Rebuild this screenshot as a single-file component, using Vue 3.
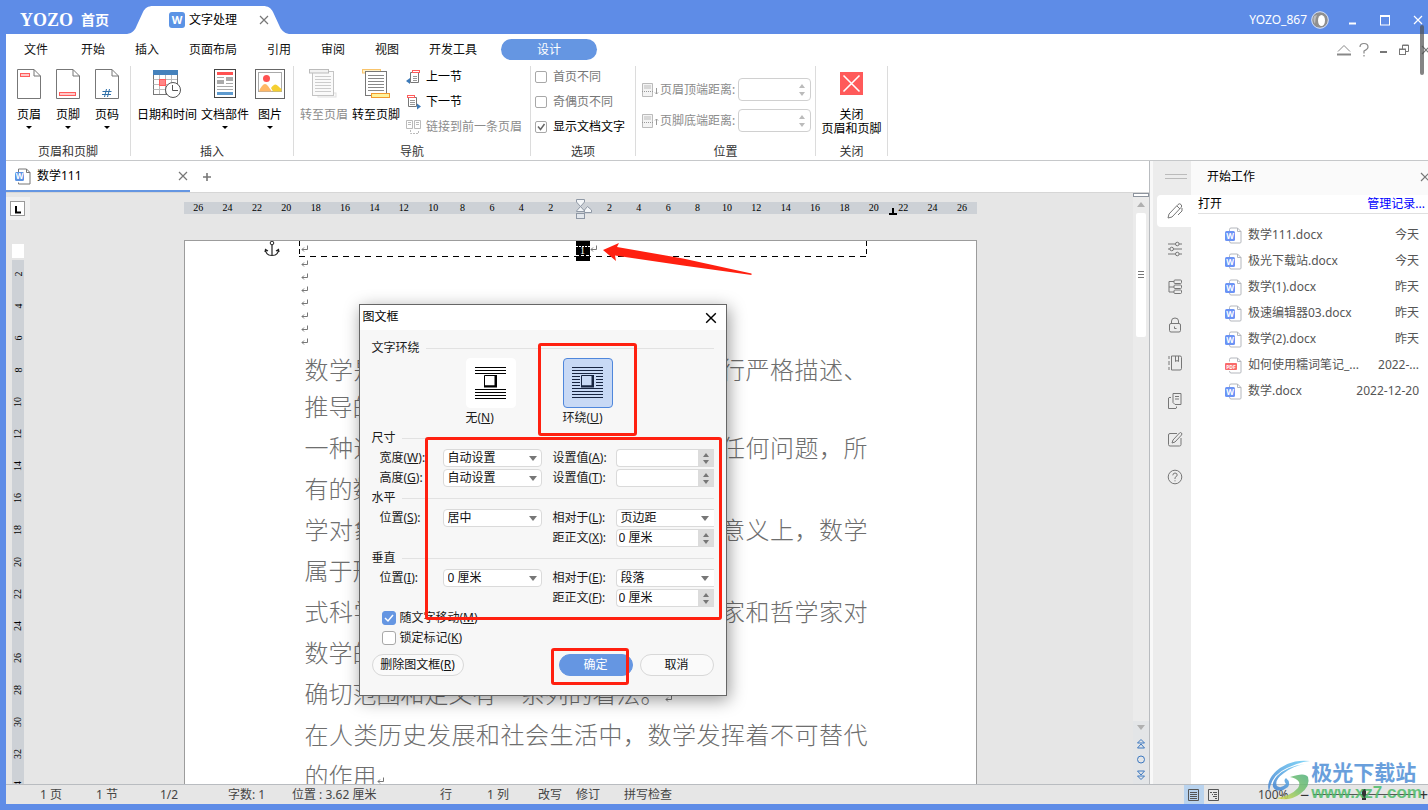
<script setup>
import { ref } from 'vue'

const menus = ['开始', '插入', '页面布局', '引用', '审阅', '视图', '开发工具']
const rulerLeft = [26, 24, 22, 20, 18, 16, 14, 12, 10, 8, 6, 4, 2]
const rulerRight = [...rulerLeft].reverse()
const rulerSide = Array.from({ length: 17 }, (_, i) => (i + 1) * 2)

const lines = [
  { text: '推导的' },
  { text: '一种通用手段，可以应用于现实世界的任何问题，所', full: true },
  { text: '有的数' },
  { text: '学对象本质上都是人为定义的。从这个意义上，数学', full: true },
  { text: '属于形' },
  { text: '式科学，而不是自然科学。不同的数学家和哲学家对', full: true },
  { text: '数学的' },
  { text: '确切范围和定义有一系列的看法。', mark: true },
  { text: '在人类历史发展和社会生活中，数学发挥着不可替代', full: true },
  { text: '的作用', mark: true },
]

const files = [
  { name: '数学111.docx', date: '今天' },
  { name: '极光下载站.docx', date: '今天' },
  { name: '数学(1).docx', date: '昨天' },
  { name: '极速编辑器03.docx', date: '昨天' },
  { name: '数学(2).docx', date: '昨天' },
  { name: '如何使用糯词笔记_...', date: '2022-...', pdf: true },
  { name: '数学.docx', date: '2022-12-20' },
]

const tools = [
  { id: 'pen', label: '开始工作' },
  { id: 'sliders', label: '属性' },
  { id: 'tree', label: '导航' },
  { id: 'lock', label: '限制编辑' },
  { id: 'book', label: '书签' },
  { id: 'copy', label: '剪贴板' },
  { id: 'edit', label: '修订' },
  { id: 'help', label: '帮助' },
]

const status = ['1 页', '1 节', '1/2', '字数: 1', '位置 : 3.62 厘米', '行', '1 列', '改写', '修订', '拼写检查']

const firstDiff = ref(false)
const oddDiff = ref(false)
const showText = ref(true)
const moveWithText = ref(true)
const lockAnchor = ref(false)
</script>

<template>
  <div class="app">
    <svg class="sprite" aria-hidden="true">
      <symbol id="page" viewBox="0 0 24 30">
        <path d="M.5.5H17L23.500 7V29.500H.5Z" fill="#fff" stroke="#777" />
        <path d="M17 .5V7H23.500" fill="none" stroke="#777" />
      </symbol>
      <symbol id="ret" viewBox="0 0 8 8">
        <path d="M6.500 .5V4.500H1M3 2.500L1 4.500L3 6.500" fill="none" stroke="#777" />
      </symbol>
      <symbol id="cross" viewBox="0 0 10 10">
        <path d="M1 1L9 9M9 1L1 9" fill="none" stroke="currentColor" stroke-width="1.200" />
      </symbol>
      <symbol id="pen" viewBox="0 0 16 16">
        <path d="M1 15L2 11L11 1.500Q12.500 0 14 1.500Q15.500 3 14 4.500L5 14Z M10 3L13 6 M15 5V8L11 12" />
      </symbol>
      <symbol id="sliders" viewBox="0 0 16 16">
        <path d="M1 3H8.500M12 3H15M1 8H3M6.500 8H15M1 13H8.500M12 13H15" />
        <circle cx="10.300" cy="3" r="1.800" /><circle cx="4.700" cy="8" r="1.800" /><circle cx="10.300" cy="13" r="1.800" />
      </symbol>
      <symbol id="tree" viewBox="0 0 16 16">
        <path d="M7 2.500H2V13H7M2 8H7" />
        <rect x="7" y="1" width="7.500" height="3.500" rx="1" /><rect x="7" y="6" width="7.500" height="3.500" rx="1" /><rect x="7" y="11" width="7.500" height="3.500" rx="1" />
      </symbol>
      <symbol id="lock" viewBox="0 0 16 16">
        <rect x="2.500" y="6.500" width="11" height="8.500" rx="1.500" />
        <path d="M4.500 6.500V4Q4.500 1 8 1Q11.500 1 11.500 4V6.500M7.500 9.500V11.500H9.500" />
      </symbol>
      <symbol id="book" viewBox="0 0 16 16">
        <path d="M4.500 1H13Q14.500 1 14.500 2.500V13.500Q14.500 15 13 15H4.500ZM8.500 1V6.500L10 5.500L11.500 6.500V1M2 1V4M2 6V10M2 12V15" />
      </symbol>
      <symbol id="copy" viewBox="0 0 16 16">
        <path d="M6 .5H14V11.500H8L6 9.500ZM8 3.500H12M8 6H12M4 4.500H2L1.500 5V15.500H9L9.500 15V13.500" />
      </symbol>
      <symbol id="edit" viewBox="0 0 16 16">
        <path d="M10 2.500H3Q1.500 2.500 1.500 4V13.500Q1.500 15 3 15H12.500Q14 15 14 13.500V7M5 12L6 9L12.500 2Q13.500 1 14.500 2Q15.300 3 14.500 4L8 11Z" />
      </symbol>
      <symbol id="help" viewBox="0 0 16 16">
        <circle cx="8" cy="8" r="6.800" />
        <path d="M5.800 6.300Q6 4 8 4Q10.200 4 10.200 6Q10.200 7.300 8 8.500V10M8 11.300V12.300" />
      </symbol>
    </svg>

    <header class="titlebar">
      <span class="brand">YOZO</span>
      <a class="home" href="#">首页</a>
      <div class="app-tab">
        <svg class="tab-shape" viewBox="0 0 162 28" preserveAspectRatio="none"><path d="M0 28C6 27 8 24 10 19L16 6C18 2 21 0 26 0H136C141 0 144 2 146 6L152 19C154 24 157 27 162 28Z" fill="#fff" /></svg>
        <svg class="w-logo" viewBox="0 0 16 16"><rect width="16" height="16" rx="3" fill="#5b93e5" /><text x="8" y="12" text-anchor="middle" class="logo-w">W</text></svg>
        <span>文字处理</span>
        <button class="plain tab-close" aria-label="关闭标签"><svg width="10" height="10"><use href="#cross" /></svg></button>
      </div>
      <div class="user">
        <span>YOZO_867</span>
        <svg width="18" height="18" viewBox="0 0 18 18"><circle cx="9" cy="9" r="8.300" fill="#8f8f8f" stroke="#d9e4fa" /><ellipse cx="10.500" cy="9.500" rx="3.500" ry="5.500" fill="#fff" /><path d="M3 5Q1.500 9 4 13Q4 8 6 4Z" fill="#bdbdbd" /></svg>
      </div>
      <button class="plain win" aria-label="最小化"><svg width="12" height="12"><path d="M2 9.500H9" stroke="#fff" stroke-width="2" /></svg></button>
      <button class="plain win" aria-label="最大化"><svg width="12" height="12"><rect x="1.500" y="2" width="9" height="9" fill="none" stroke="#fff" /><path d="M1 2H11" stroke="#fff" stroke-width="2" /></svg></button>
      <button class="plain win" aria-label="关闭"><svg width="10" height="10"><use href="#cross" /></svg></button>
    </header>

    <nav class="menubar">
      <a href="#" class="file">文件</a>
      <a v-for="m in menus" :key="m" href="#">{{ m }}</a>
      <a href="#" class="pill">设计</a>
      <div class="menu-right">
        <svg width="16" height="14"><path d="M2 8.500L8 2.500L14 8.500" fill="none" stroke="#888" /><path d="M1 11.500H15" stroke="#888" stroke-width="2" /></svg>
        <svg width="10" height="16"><path d="M1 5Q1 1.500 5 1.500Q9 1.500 9 5Q9 7 5 9V11.500M5 13V14.500" fill="none" stroke="#888" stroke-width="1.200" /></svg>
        <svg width="8" height="14"><path d="M0 9H7" stroke="#777" stroke-width="2" /></svg>
        <svg width="11" height="12"><rect x=".5" y="5" width="6" height="5.500" fill="none" stroke="#777" /><path d="M3.500 5V1H9.500V7.500H6.500M3 1.500H10M0 5.500H7" fill="none" stroke="#777" /></svg>
        <svg width="10" height="10" class="gray"><use href="#cross" /></svg>
      </div>
    </nav>

    <section class="ribbon">
      <div class="group g-head">
        <div class="tools">
          <button class="plain big"><svg width="24" height="30"><use href="#page" /><rect x="3.500" y="4.500" width="9" height="3" fill="#ffc9c9" stroke="#ff5c5c" /></svg><span>页眉</span><i class="caret" /></button>
          <button class="plain big"><svg width="24" height="30"><use href="#page" /><rect x="3.500" y="23.500" width="16" height="3" fill="#ffc9c9" stroke="#ff5c5c" /></svg><span>页脚</span><i class="caret" /></button>
          <button class="plain big"><svg width="24" height="30"><use href="#page" /><path d="M7.500 22.500H16.500M7 25.500H16M11.500 20L9.500 28M14.500 20L12.500 28" stroke="#2f6fa8" /></svg><span>页码</span><i class="caret" /></button>
        </div>
        <div class="cap">页眉和页脚</div>
      </div>

      <div class="group g-insert">
        <div class="tools">
          <button class="plain big">
            <svg width="30" height="30"><rect x="1.500" y="1.500" width="24" height="24" fill="#fff" stroke="#777" /><path d="M1.500 10.500H25M1.500 15.500H25M1.500 20.500H25M7.500 5V25M13.500 5V25M19.500 5V25" stroke="#bbb" /><rect x="1" y="1" width="25" height="5" fill="#4682bc" /><rect x="7.500" y="10.500" width="6" height="6" fill="#ff8585" stroke="#ff5c5c" /><circle cx="21" cy="21" r="7.500" fill="#fff" stroke="#555" /><path d="M20.500 16V21.500H26" fill="none" stroke="#555" /></svg>
            <span>日期和时间</span>
          </button>
          <button class="plain big">
            <svg width="22" height="30"><rect x=".5" y=".5" width="21" height="28" fill="#fff" stroke="#444" /><rect x="3" y="3" width="16" height="3" fill="#ff5252" /><rect x="3" y="11" width="7" height="4" fill="#aaa" /><rect x="12" y="8" width="7" height="4" fill="#aaa" /><path d="M3 8.500H10M12 14.500H19M3 17.500H19M3 20.500H19" stroke="#aaa" /><rect x="3" y="23" width="16" height="3" fill="#5e9ace" /></svg>
            <span>文档部件</span><i class="caret" />
          </button>
          <button class="plain big pic">
            <svg width="30" height="30"><rect x=".5" y=".5" width="29" height="29" fill="#fff" stroke="#666" /><rect x="3.500" y="3.500" width="23" height="19" fill="none" stroke="#aaa" /><circle cx="11.500" cy="9.500" r="3.500" fill="#ff5252" /><path d="M4 22.500Q4.500 20 7 17Q10 13 13 17Q15 20 17 22.500Z" fill="#ffb866" /><path d="M16 19Q20 13 23 17Q25 19 26.500 20V22.500H18Z" fill="#f5cf32" /></svg>
            <span>图片</span><i class="caret" />
          </button>
        </div>
        <div class="cap">插入</div>
      </div>

      <div class="group g-nav">
        <div class="tools">
          <button class="plain big off" disabled>
            <svg width="30" height="30"><rect x="9" y="24" width="18" height="4" fill="#fafafa" stroke="#e0e0e0" /><rect x="3.500" y="2.500" width="21" height="24" fill="#fafafa" stroke="#c4c4c4" /><path d="M6 7.500H22M6 10.500H22M6 13.500H22M6 16.500H22M6 19.500H22M6 22.500H22" stroke="#ccc" /><rect x=".5" y=".5" width="19" height="3.500" fill="#f2f2f2" stroke="#bbb" /></svg>
            <span>转至页眉</span>
          </button>
          <button class="plain big">
            <svg width="30" height="30"><rect x="1.500" y=".5" width="18" height="3.500" fill="#fff1c9" stroke="#f9c46b" /><rect x="4.500" y="2.500" width="21" height="24" fill="#fff" stroke="#777" /><path d="M7 6.500H23M7 9.500H23M7 12.500H23M7 15.500H23M7 18.500H23M7 21.500H23" stroke="#888" /><rect x="10.500" y="24.500" width="18" height="4" fill="#fff39c" stroke="#f29a2e" /></svg>
            <span>转至页脚</span>
          </button>
          <div class="stack">
            <button class="plain small">
              <svg width="16" height="16"><path d="M4.500 3.500H12.500V13.500H4.500Z" fill="#fff" stroke="#777" /><path d="M7 7.500H11M7 9.500H11M7 11.500H11" stroke="#999" /><rect x="6.500" y="1.500" width="7" height="2" fill="#fff" stroke="#ff5c5c" /><path d="M0 12L4 9V15Z" fill="#3d7ab8" /></svg>上一节
            </button>
            <button class="plain small">
              <svg width="16" height="16"><path d="M2.500 3.500H10.500V12.500H2.500Z" fill="#fff" stroke="#777" /><path d="M4 6.500H9M4 8.500H9M4 10.500H9" stroke="#999" /><rect x="1.500" y="1.500" width="7" height="2" fill="#fff" stroke="#ff5c5c" /><path d="M15 12.500L11 9.500V15.500Z" fill="#3d7ab8" /></svg>下一节
            </button>
            <button class="plain small off" disabled>
              <svg width="16" height="16"><path d="M.5 1.500H6.500V9.500H.5ZM8.500 1.500H14.500V9.500H8.500ZM2 3.500H5M2 5.500H5M10 3.500H13M10 5.500H13" fill="none" stroke="#bbb" /><path d="M4.500 11V14.500H12.500V11" fill="none" stroke="#bbb" stroke-dasharray="2 1" /></svg>链接到前一条页眉
            </button>
          </div>
        </div>
        <div class="cap">导航</div>
      </div>

      <div class="group g-opt">
        <div class="tools">
          <div class="stack">
            <label class="check dim"><input v-model="firstDiff" type="checkbox">首页不同</label>
            <label class="check dim"><input v-model="oddDiff" type="checkbox">奇偶页不同</label>
            <label class="check"><input v-model="showText" type="checkbox">显示文档文字</label>
          </div>
        </div>
        <div class="cap">选项</div>
      </div>

      <div class="group g-pos">
        <div class="tools">
          <div class="dist">
            <svg width="18" height="14"><path d="M.5 .5H10.500V13.500H.5ZM2 3H9M2 5H9" fill="#f4f4f4" stroke="#bbb" /><path d="M0 8.500H11" stroke="#999" stroke-dasharray="1 1" /><path d="M14.500 5V11M13 9.500L14.500 11L16 9.500" fill="none" stroke="#999" /></svg>
            <label for="top-dist">页眉顶端距离:</label>
            <span class="num"><input id="top-dist" type="text" disabled><i class="spin" /></span>
          </div>
          <div class="dist">
            <svg width="18" height="14"><path d="M.5 .5H10.500V13.500H.5ZM2 3H9M2 5H9" fill="#f4f4f4" stroke="#bbb" /><path d="M0 8.500H11" stroke="#999" stroke-dasharray="1 1" /><path d="M14.500 11V5M13 6.500L14.500 5L16 6.500" fill="none" stroke="#999" /></svg>
            <label for="bottom-dist">页脚底端距离:</label>
            <span class="num"><input id="bottom-dist" type="text" disabled><i class="spin" /></span>
          </div>
        </div>
        <div class="cap">位置</div>
      </div>

      <div class="group g-close">
        <div class="tools">
          <button class="plain big close-hf">
            <svg width="23" height="23"><rect width="23" height="23" fill="#ff5a5a" /><path d="M3.500 3.500L19.500 19.500M19.500 3.500L3.500 19.500" stroke="#fff" stroke-width="1.600" /></svg>
            <span>关闭<br>页眉和页脚</span>
          </button>
        </div>
        <div class="cap">关闭</div>
      </div>
    </section>

    <main class="main">
      <div class="doc-col">
        <div class="doc-tabs">
          <div class="doc-tab">
            <svg width="17" height="17" viewBox="0 0 17 17">
              <path d="M4.500 4V1H12.500L16 4.500V16H4.500V14.500M12.500 1V4.500H16" fill="none" stroke="#777" />
              <rect x="1" y="4" width="9" height="9" rx="1.500" fill="#5b93e5" />
              <text x="5.500" y="11" text-anchor="middle" class="badge-w">W</text>
            </svg>
            <span>数学111</span>
            <button class="plain tab-close" aria-label="关闭文档"><svg width="10" height="10"><use href="#cross" /></svg></button>
          </div>
          <button class="plain add" aria-label="新建"><svg width="10" height="10"><path d="M5 1V9M1 5H9" stroke="#777" stroke-width="1.600" /></svg></button>
        </div>

        <div class="workspace">
          <aside class="v-ruler">
            <div class="tab-kind"><svg width="15" height="15"><rect x=".5" y=".5" width="14" height="14" fill="#fff" stroke="#999" /><path d="M6 5V11.500H11" fill="none" stroke="#000" stroke-width="2" /></svg></div>
            <div class="v-white" />
            <div class="v-nums"><span v-for="n in rulerSide" :key="n"><b>{{ n }}</b></span></div>
          </aside>

          <div class="canvas">
            <div class="h-ruler">
              <span v-for="n in rulerLeft" :key="'l' + n">{{ n }}</span>
              <span class="indent"><svg width="18" height="22"><path d="M1.500 1.500H9.500V4L5.500 8.500L9.500 13V13.500H1.500V13L5.500 8.500L1.500 4Z" fill="#f4f6f8" stroke="#8f98a5" /><rect x="1.500" y="15.500" width="8" height="5" fill="#e3e7ec" stroke="#8f98a5" /><path d="M9.500 14.500V12L12.500 8.500L16.500 12V14.500Z" fill="#f4f6f8" stroke="#8f98a5" /></svg></span>
              <span v-for="n in rulerRight" :key="'r' + n">{{ n }}</span>
              <svg class="tab-stop" width="8" height="7"><path d="M0 6H8M4 6V0" stroke="#000" stroke-width="2" /></svg>
            </div>

            <article class="page">
              <svg class="anchor" width="16" height="16"><circle cx="8" cy="2" r="1.800" fill="none" stroke="#222" /><path d="M8 4V14.500M1.500 9Q2 14.500 8 14.500Q14 14.500 14.500 9M1 11L1.500 8.500L4 10M15 11L14.500 8.500L12 10" fill="none" stroke="#222" stroke-width="1.200" /></svg>
              <div class="frame">
                <svg width="8" height="8"><use href="#ret" /></svg>
                <span class="sel">1</span>
                <svg width="8" height="8"><use href="#ret" /></svg>
              </div>
              <svg class="arrow" width="150" height="36" viewBox="0 0 150 36"><path d="M0 9L16 2L14 6L80 17.500L148.500 32.500V34L80 24.500L12 14.500L13 20Z" fill="#ff2010" /></svg>
              <div class="marks"><svg v-for="n in 7" :key="n" width="8" height="8"><use href="#ret" /></svg></div>
              <div class="body">
                <p class="first full">数学是人类对事物的抽象结构与模式进行严格描述、</p>
                <p v-for="l in lines" :key="l.text" :class="{ full: l.full }">{{ l.text }}<svg v-if="l.mark" width="8" height="8"><use href="#ret" /></svg></p>
              </div>

              <form class="dialog" role="dialog" aria-label="图文框" @submit.prevent>
                <div class="dlg-title"><span>图文框</span><button type="button" class="plain" aria-label="关闭"><svg width="12" height="12"><use href="#cross" /></svg></button></div>
                <div class="dlg-body">
                  <div class="legend wide">文字环绕</div>
                  <div class="wraps">
                    <div class="wrap">
                      <button type="button" class="tile" aria-label="无"><svg width="32" height="34"><path d="M0 1.500H31M0 4.500H31M0 7.500H31M0 23.500H31M0 26.500H31M0 29.500H31M0 32.500H31" stroke="#000" /><path d="M9.500 9.500H20V20H9.500Z" fill="none" stroke="#000" /><path d="M21 9V20.500H9" fill="none" stroke="#000" stroke-width="2" /></svg></button>
                      <span>无(<u>N</u>)</span>
                    </div>
                    <div class="wrap">
                      <button type="button" class="tile on" aria-label="环绕"><svg width="32" height="34"><path d="M0 1.500H31M0 4.500H31M0 7.500H31M0 10.500H8M24 10.500H31M0 13.500H8M24 13.500H31M0 16.500H8M24 16.500H31M0 19.500H8M24 19.500H31M0 22.500H31M0 25.500H31M0 28.500H31M0 31.500H31" stroke="#172440" /><path d="M9.500 9.500H20V20H9.500Z" fill="none" stroke="#172440" /><path d="M21 9V20.500H9" fill="none" stroke="#172440" stroke-width="2" /></svg></button>
                      <span>环绕(<u>U</u>)</span>
                    </div>
                  </div>

                  <div class="legend">尺寸</div>
                  <div class="grid">
                    <label for="w-mode">宽度(<u>W</u>):</label>
                    <span class="drop"><select id="w-mode"><option>自动设置</option></select></span>
                    <label for="w-val" class="third">设置值(<u>A</u>):</label>
                    <span class="field"><input id="w-val" type="text"><i class="spin" /></span>
                    <label for="h-mode">高度(<u>G</u>):</label>
                    <span class="drop"><select id="h-mode"><option>自动设置</option></select></span>
                    <label for="h-val" class="third">设置值(<u>T</u>):</label>
                    <span class="field"><input id="h-val" type="text"><i class="spin" /></span>
                  </div>

                  <div class="legend">水平</div>
                  <div class="grid">
                    <label for="x-pos">位置(<u>S</u>):</label>
                    <span class="drop"><select id="x-pos"><option>居中</option></select></span>
                    <label for="x-rel" class="third">相对于(<u>L</u>):</label>
                    <span class="drop cut"><select id="x-rel"><option>页边距</option></select></span>
                    <label for="x-gap" class="third">距正文(<u>X</u>):</label>
                    <span class="field"><input id="x-gap" type="text" value="0 厘米"><i class="spin" /></span>
                  </div>

                  <div class="legend">垂直</div>
                  <div class="grid">
                    <label for="y-pos">位置(<u>I</u>):</label>
                    <span class="drop"><select id="y-pos"><option>0 厘米</option></select></span>
                    <label for="y-rel" class="third">相对于(<u>E</u>):</label>
                    <span class="drop cut"><select id="y-rel"><option>段落</option></select></span>
                    <label for="y-gap" class="third">距正文(<u>F</u>):</label>
                    <span class="field"><input id="y-gap" type="text" value="0 厘米"><i class="spin" /></span>
                  </div>

                  <label class="dcheck"><input v-model="moveWithText" type="checkbox">随文字移动(<u>M</u>)</label>
                  <label class="dcheck"><input v-model="lockAnchor" type="checkbox">锁定标记(<u>K</u>)</label>
                  <div class="actions">
                    <button type="button" class="round del">删除图文框(<u>R</u>)</button>
                    <button type="submit" class="round ok">确定</button>
                    <button type="button" class="round">取消</button>
                  </div>
                </div>
                <i class="hl hl-wrap" /><i class="hl hl-size" /><i class="hl hl-ok" />
              </form>
            </article>
          </div>

          <div class="v-scroll">
            <i class="split" />
            <i class="tri up" />
            <div class="thumb"><svg width="6" height="8"><path d="M0 .5H6M0 3.500H6M0 6.500H6" stroke="#777" /></svg></div>
            <div class="scroll-end">
              <i class="tri" />
              <svg width="10" height="11"><path d="M1.500 5L5 1.500L8.500 5ZM1.500 10L5 6L8.500 10Z" fill="none" stroke="#3c78c0" /></svg>
              <svg width="10" height="11"><circle cx="5" cy="5.500" r="3.500" fill="none" stroke="#3c78c0" /></svg>
              <svg width="10" height="11"><path d="M1.500 1H8.500L5 5ZM1.500 6H8.500L5 9.500Z" fill="none" stroke="#3c78c0" /></svg>
            </div>
          </div>
        </div>
      </div>

      <aside class="strip">
        <i class="grip" />
        <button v-for="(t, i) in tools" :key="t.id" class="plain tool" :class="{ on: i === 0 }" :aria-label="t.label"><svg width="16" height="16"><use :href="'#' + t.id" /></svg></button>
      </aside>

      <aside class="panel">
        <div class="panel-head"><span>开始工作</span><button class="plain" aria-label="关闭面板"><svg width="10" height="10"><use href="#cross" /></svg></button></div>
        <div class="open"><span>打开</span><a href="#">管理记录...</a></div>
        <ul>
          <li v-for="f in files" :key="f.name">
            <svg width="17" height="17" viewBox="0 0 17 17">
              <path d="M4.500 4.500V2.500Q4.500 1 6 1H12.500L16 4.500V15Q16 16 15 16H6Q4.500 16 4.500 14" fill="none" stroke="#b4b7bd" />
              <path d="M12.500 1V4.500H16" fill="none" stroke="#b4b7bd" />
              <template v-if="f.pdf">
                <rect x="0" y="6" width="12" height="7" rx="1" fill="#f96a6a" />
                <text x="6" y="12" text-anchor="middle" class="badge-pdf">PDF</text>
              </template>
              <template v-else>
                <rect x="0" y="4" width="10" height="10" rx="1.500" fill="#6b93f5" />
                <text x="5" y="12" text-anchor="middle" class="badge-w">W</text>
              </template>
            </svg>
            <span>{{ f.name }}</span><time>{{ f.date }}</time>
          </li>
        </ul>
      </aside>
    </main>

    <footer class="status">
      <div class="facts"><span v-for="s in status" :key="s">{{ s }}</span></div>
      <button class="plain view on" aria-label="页面视图"><svg width="12" height="12"><path d="M.5 .5H10.500V11.500H.5ZM2 3.500H9M2 5.500H9M2 7.500H9M2 9.500H9" fill="none" stroke="#555" /></svg></button>
      <button class="plain view" aria-label="大纲视图"><svg width="12" height="12"><path d="M.5 .5H10.500V11.500H.5ZM2 3.500H4M5 3.500H9M4 5.500H5M6 5.500H9M5 7.500H9M7 9.500H9" fill="none" stroke="#555" /></svg></button>
      <span class="pct">100%</span>
      <span class="sign">−</span>
      <input class="zoom" type="range" aria-label="缩放" min="0" max="200" value="100">
      <span class="sign plus">+</span>
    </footer>

    <i class="edge-thumb" />
    <div class="mark">
      <svg width="44" height="42" viewBox="0 0 44 42">
        <defs>
          <linearGradient id="mk-a" x1="0" y1="1" x2="1" y2="0"><stop offset="0" stop-color="#3f7fd0" /><stop offset="1" stop-color="#6fd0f7" /></linearGradient>
          <linearGradient id="mk-b" x1="0" y1="1" x2="1" y2="0"><stop offset="0" stop-color="#e8dc46" /><stop offset=".5" stop-color="#7cc46a" /><stop offset="1" stop-color="#4faf7c" /></linearGradient>
        </defs>
        <path d="M43 1Q26 -1 13 8Q-2 19 2 32Q4 15 20 8Q32 2 43 1Z" fill="url(#mk-a)" />
        <path d="M38 4Q20 6 10 16Q2 26 9 30Q15 32 21 27Q24 22 19 18Q16 20 19 24Q14 29 10 26Q7 20 17 13Q26 6 38 4Z" fill="url(#mk-a)" />
        <path d="M23 17Q38 12 41 17Q44 26 33 34Q22 42 9 38Q24 36 31 28Q36 20 23 17Z" fill="url(#mk-b)" />
      </svg>
      <div><strong>极光下载站</strong><em>www.xz7.com</em></div>
    </div>
  </div>
</template>

<style>
html, body { height: 100%; }
body { margin: 0; overflow: hidden; background: #fff; }
#app { height: 100%; }
</style>

<style scoped>
* { box-sizing: border-box; }
.app {
  position: relative; display: flex; flex-direction: column; height: 100vh; overflow: hidden;
  border-left: 6px solid #5e8ce7; border-bottom: 6px solid #5e8ce7;
  font: 12px/16px "Noto Sans", "Noto Sans CJK SC", sans-serif; color: #111; background: #fff;
}
.sprite { position: absolute; width: 0; height: 0; }
svg { display: block; flex: none; }
a { color: inherit; text-decoration: none; }
i { font-style: normal; }
.plain { display: flex; align-items: center; justify-content: center; border: 0; padding: 0; margin: 0; background: none; font: inherit; color: inherit; }
.badge-w { font: bold 8px "Open Sans", sans-serif; fill: #fff; }
.badge-pdf { font: bold 5px "Open Sans", sans-serif; fill: #fff; }
.logo-w { font: bold 11px "Open Sans", sans-serif; fill: #fff; }
.caret { width: 0; border: 3px solid transparent; border-top: 3px solid #000; border-bottom: 0; }

.titlebar { flex: none; display: flex; align-items: center; height: 34px; background: #5e8ce7; color: #fff; padding: 6px 5px 0 14px; }
.brand { font: bold 18px/20px "Liberation Serif", serif; }
.home { margin-left: 8px; font-size: 14px; line-height: 20px; font-weight: bold; }
.app-tab { position: relative; display: flex; align-items: center; height: 28px; width: 162px; margin-left: 18px; padding: 0 20px 0 42px; color: #000; }
.app-tab > * { position: relative; }
.app-tab .tab-shape { position: absolute; inset: 0; width: 100%; height: 100%; }
.w-logo { width: 16px; height: 16px; margin-right: 4px; }
.tab-close { margin-left: auto; color: #777; }
.user { display: flex; align-items: center; gap: 4px; margin-left: auto; margin-right: 8px; }
.win { width: 32px; height: 28px; }
.win:last-child { width: 20px; margin-left: 2px; justify-content: flex-end; }

.menubar { flex: none; display: flex; align-items: center; gap: 30px; height: 31px; padding-left: 18px; }
.file { margin-right: 3px; }
.pill { width: 96px; height: 21px; margin-left: -6px; border-radius: 11px; background: #6596e2; color: #fff; text-align: center; line-height: 21px; }
.menu-right { display: flex; align-items: center; gap: 11px; margin-left: auto; margin-right: -3px; }
.menu-right > :first-child { margin-right: -4px; }
.gray { color: #777; }

.ribbon { flex: none; display: flex; height: 96px; padding-top: 1px; border-bottom: 1px solid #c6c8ca; }
.group { display: flex; flex-direction: column; height: 90px; border-right: 1px solid #dcdcdc; }
.tools { display: flex; flex: 1; padding-top: 3px; }
.cap { height: 12px; line-height: 16px; margin-top: -2px; text-align: center; color: #333; }
.g-head { width: 125px; } .g-head .tools { padding-left: 11px; gap: 15px; }
.g-insert { width: 163px; } .g-insert .tools { padding-left: 6px; gap: 4px; }
.g-nav { width: 237px; } .g-nav .tools { padding-left: 6px; gap: 4px; }
.g-opt { width: 105px; } .g-opt .tools { padding-left: 4px; }
.g-pos { width: 180px; } .g-pos .tools { flex-direction: column; padding: 12px 0 0 6px; gap: 8px; }
.g-close { width: 72px; } .g-close .tools { justify-content: center; }
.big { flex-direction: column; justify-content: flex-start; align-self: flex-start; line-height: 16px; white-space: nowrap; color: #000; }
.big span { margin: 8px 0 3px; }
.pic { margin-left: 2px; }
.plain.off { color: #8c8c8c; }
.close-hf svg { margin-top: 3px; }
.close-hf span { line-height: 14px; margin-top: 13px; }
.stack { display: flex; flex-direction: column; gap: 9px; margin-left: 2px; }
.g-opt .stack { margin-left: 0; }
.small { gap: 4px; justify-content: flex-start; white-space: nowrap; color: #000; }
.check { display: flex; align-items: center; gap: 6px; white-space: nowrap; color: #000; }
.check.dim { color: #777; }
.check input, .dcheck input { appearance: none; width: 12px; height: 12px; margin: 0; border: 1px solid #a8a8a8; border-radius: 2px; background: #fff; }
.check input:checked { background: #fff url("data:image/svg+xml,%3Csvg xmlns='http://www.w3.org/2000/svg' width='10' height='10'%3E%3Cpath d='M2 4.500L4.500 7.500L8.500 2' fill='none' stroke='%23666' stroke-width='1.500'/%3E%3C/svg%3E"); }
.dist { display: flex; align-items: center; height: 23px; color: #8c8c8c; white-space: nowrap; }
.dist label { flex: 1; }
.num { display: flex; width: 73px; height: 23px; margin-right: 4px; border: 1px solid #d0d0d0; border-radius: 4px; }
.num input { flex: 1; min-width: 0; border: 0; background: none; }
.spin { display: flex; flex-direction: column; align-items: center; justify-content: center; gap: 4px; width: 16px; }
.spin::before, .spin::after { content: ""; border: 3px solid transparent; border-top-width: 0; border-bottom: 4px solid #bbb; }
.spin::after { border-top: 4px solid #bbb; border-bottom: 0; }

.main { flex: 1; display: flex; min-height: 0; }
.doc-col { flex: 1; min-width: 0; display: flex; flex-direction: column; border-right: 1px solid #b9bcc0; }
.doc-tabs { flex: none; display: flex; height: 32px; border-bottom: 1px solid #d6d6d6; }
.doc-tab { display: flex; align-items: center; width: 184px; padding: 1px 2px 0 8px; border-bottom: 2px solid #6596e2; }
.doc-tab span { margin-left: 6px; color: #000; }
.add { width: 33px; }
.workspace { flex: 1; display: flex; min-height: 0; background: #e6e6e6; }
.v-ruler { width: 24px; display: flex; flex-direction: column; align-items: center; padding-top: 4px; overflow: hidden; }
.tab-kind { flex: none; display: flex; align-items: center; justify-content: center; width: 24px; height: 23px; background: #f0f0f0; padding-right: 1px; }
.v-white { flex: none; width: 12px; height: 14px; margin-top: 24px; background: #fff; }
.v-nums { flex: 1; min-height: 0; width: 12px; overflow: hidden; background: linear-gradient(#e6e6e6 2px, #cdd1d6 2px); }
.v-nums span { display: flex; align-items: center; justify-content: center; height: 32px; }
.v-nums b, .h-ruler span { font: 10px/12px "Liberation Serif", serif; color: #000; }
.v-nums b { transform: rotate(-90deg); }
.canvas { flex: 1; min-width: 0; display: flex; flex-direction: column; align-items: center; padding: 9px 3px 0 0; overflow: hidden; }
.h-ruler { position: relative; flex: none; display: flex; width: 793px; height: 12px; background: #cdd1d6; }
.h-ruler span { flex: 1 1 0; text-align: center; }
.h-ruler .indent { position: relative; }
.indent svg { position: absolute; left: 10px; top: -4px; }
.tab-stop { position: absolute; left: 705px; top: 6px; }

.page { position: relative; flex: 1 0 auto; width: 793px; margin-top: 26px; border: 1px solid #9c9c9c; border-bottom: 0; background: #fff; padding: 0 109px 0 114px; }
.anchor { position: absolute; left: 79px; top: 0; }
.frame {
  display: flex; align-items: center; height: 16px; padding-left: 2px;
  background:
    repeating-linear-gradient(90deg, #000 0 6px, transparent 6px 11px) 0 100% / 100% 1px no-repeat,
    repeating-linear-gradient(#000 0 5px, transparent 5px 8px) 0 0 / 1px 100% no-repeat,
    repeating-linear-gradient(#000 0 5px, transparent 5px 8px) 100% 0 / 1px 100% no-repeat;
}
.sel {
  align-self: flex-start; margin-left: 267px; width: 14px; height: 20px; color: #fff; text-align: center; font: 10px/20px "Liberation Serif", serif;
  background:
    repeating-linear-gradient(90deg, #fff 0 2px, #000 2px 3px) 0 5px / 100% 1px no-repeat,
    repeating-linear-gradient(90deg, #fff 0 3px, #000 3px 5px) 0 14px / 100% 1px no-repeat,
    #000;
}
.arrow { position: absolute; left: 418px; top: 0; }
.marks { display: flex; flex-direction: column; gap: 5px; padding: 3px 0 0 2px; height: 91px; }
.body { margin-top: 4px; padding-left: 6px; width: 569px; font: 300 24px/41px "Noto Sans CJK SC", sans-serif; color: #6e6e6e; }
.body p { margin: 0; white-space: nowrap; }
.body p.first { line-height: 33px; }
.body p.full { white-space: normal; text-align: justify; text-align-last: justify; }
.body p svg { display: inline-block; vertical-align: 0; }

.dialog { position: absolute; left: 174px; top: 63px; width: 368px; margin: 0; border: 1px solid #666; background: #f7f7f7; box-shadow: 2px 4px 16px rgba(0, 0, 0, .4); color: #1a1a1a; }
.dlg-title { display: flex; justify-content: space-between; height: 25px; padding: 0 9px 0 3px; line-height: 24px; background: #fff; color: #000; }
.dlg-body { padding: 8px 12px 19px; }
.legend { display: flex; align-items: center; gap: 6px; height: 20px; }
.legend::after { content: ""; flex: 1; height: 1px; background: #e2e2e2; }
.wraps { display: flex; gap: 47px; padding-left: 94px; }
.wrap { display: flex; flex-direction: column; width: 50px; line-height: 20px; white-space: nowrap; }
.tile { display: flex; align-items: center; justify-content: center; width: 50px; height: 50px; padding: 0; border: 1px solid #fff; border-radius: 4px; background: #fff; }
.tile.on { border-color: #4f87dc; background: #c8d9f5; }
.grid { display: grid; grid-template-columns: 63px 99px 74px 98px; grid-auto-rows: 20px; align-items: center; padding-left: 8px; white-space: nowrap; }
.grid .third { grid-column: 3; margin-left: 11px; }
.drop { position: relative; height: 18px; }
.drop::after { content: ""; position: absolute; right: 5px; top: 7px; border: 4px solid transparent; border-top: 5px solid #777; border-bottom: 0; }
.drop select, .field { width: 100%; height: 18px; border: 1px solid #dadada; border-radius: 4px; background: #fff; }
.drop select { appearance: none; display: block; padding: 0 4px; font: inherit; line-height: 16px; color: #111; }
.drop.cut select { border-right: 0; border-radius: 4px 0 0 4px; }
.field { display: flex; border-radius: 4px 0 0 4px; overflow: hidden; border-right: 0; }
.field input { flex: 1; min-width: 0; border: 0; padding: 0 2px; background: none; font: inherit; color: #111; }
.field .spin { background: #dcdcdc; gap: 3px; }
.field .spin::before { border-bottom-color: #777; }
.field .spin::after { border-top-color: #777; }
.dcheck { display: flex; align-items: center; height: 20px; margin-left: 10px; white-space: nowrap; width: max-content; }
.dcheck input { width: 14px; height: 14px; margin-right: 4px; border-radius: 3px; }
.dcheck input:checked { border-color: #6596e2; background: #6596e2 url("data:image/svg+xml,%3Csvg xmlns='http://www.w3.org/2000/svg' width='12' height='12'%3E%3Cpath d='M2 6L5 9L10 3' fill='none' stroke='white' stroke-width='1.500'/%3E%3C/svg%3E"); }
.actions { display: flex; gap: 7px; margin-top: 6px; }
.round { width: 74px; height: 22px; padding: 0; border: 1px solid #d8d8d8; border-radius: 11px; background: #fafafa; font: inherit; color: #111; }
.del { width: 92px; margin-right: auto; }
.ok { border-color: #6596e2; background: #6596e2; color: #fff; }
.hl { position: absolute; border: 3px solid #ff2010; border-radius: 3px; pointer-events: none; }
.hl-wrap { left: 178px; top: 38px; width: 99px; height: 93px; }
.hl-size { left: 65px; top: 132px; width: 297px; height: 183px; }
.hl-ok { left: 191px; top: 343px; width: 78px; height: 37px; }

.v-scroll { display: flex; flex-direction: column; align-items: center; width: 16px; background: #ebebeb; }
.split { flex: none; width: 16px; height: 4px; border: 1px solid #8d949e; background: #fff; }
.tri { flex: none; border: 4px solid transparent; border-top: 5px solid #b0b0b0; border-bottom: 0; }
.tri.up { margin: 5px 0 6px; border-top: 0; border-bottom: 5px solid #b0b0b0; }
.thumb { flex: none; display: flex; align-items: center; justify-content: center; width: 10px; height: 124px; border-radius: 2px; background: #fff; }
.scroll-end { display: flex; flex-direction: column; align-items: center; gap: 5px; margin-top: auto; padding: 4px 0 3px; width: 16px; background: #e3e5e7; }
.scroll-end .tri { margin-bottom: 3px; }

.strip { flex: none; width: 41px; padding-top: 13px; border-left: 3px solid #f8f8f8; background: #ececec; display: flex; flex-direction: column; gap: 6px; align-items: flex-end; }
.grip { width: 22px; height: 5px; margin: 0 4px 10px 0; border: solid #bbb; border-width: 1px 0; }
.tool { width: 34px; height: 32px; padding-left: 2px; border-radius: 4px 0 0 4px; }
.tool.on { background: #fff; }
.tool svg { fill: none; stroke: #777; stroke-width: 1; }
.panel { flex: none; width: 237px; background: #fff; }
.panel-head { display: flex; justify-content: space-between; align-items: center; height: 34px; padding: 0 0 2px 16px; margin-right: -2px; background: #fafafa; color: #000; }
.panel-head button { color: #777; }
.open { display: flex; justify-content: space-between; height: 19px; margin-left: 7px; padding-right: 3px; line-height: 18px; border-bottom: 1px solid #e0e0e0; color: #000; }
.open a { color: #00f; }
.panel ul { list-style: none; margin: 0; padding: 8px 9px 0 34px; }
.panel li { display: flex; align-items: center; height: 26px; color: #555; white-space: nowrap; }
.panel li span { margin-left: 6px; }
.panel time { margin-left: auto; }

.status { flex: none; display: flex; align-items: center; height: 20px; border-top: 1px solid #b9bcc0; background: #e6e6e6; color: #444; }
.facts { flex: 1; display: grid; grid-template-columns: 56px 64px 68px 64px 148px 47px 51px 38px 48px auto; padding-left: 34px; white-space: nowrap; }
.view { width: 20px; height: 19px; }
.view.on { background: #b9d3ee; }
.pct { width: 42px; margin-left: 34px; }
.sign { width: 11px; font-size: 16px; line-height: 16px; color: #333; }
.plus { width: 9px; }
.zoom { appearance: none; width: 106px; height: 16px; margin: 0 2px 0 0; background: linear-gradient(#555, #555) 50% 50% / 102px 1px no-repeat; }
.zoom::-webkit-slider-thumb { appearance: none; width: 4px; height: 11px; background: #333; }

.edge-thumb { position: absolute; right: 4px; top: 25px; width: 4px; height: 50px; border-radius: 2px; background: rgba(80, 80, 80, .7); }
.mark { position: absolute; right: 6px; bottom: -1px; display: flex; align-items: center; opacity: .85; height: 48px; }
.mark strong, .mark em { display: block; font: bold 21px/24px "Noto Sans CJK SC", sans-serif; color: #4f8fd6; }
.mark em { font: bold 17px/20px "Liberation Sans", sans-serif; color: #4dbb6a; }
</style>
